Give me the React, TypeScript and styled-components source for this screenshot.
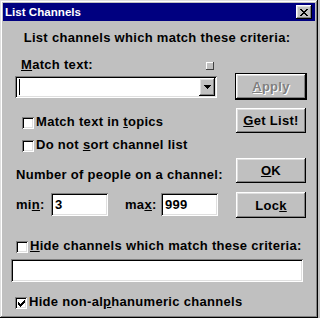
import React from "react";
import styled, { createGlobalStyle, css } from "styled-components";

const GlobalStyle = createGlobalStyle`
    html, body {
        margin: 0;
        padding: 0;
        background: #c0c0c0;
    }
    body {
        font-family: "Liberation Sans", Arial, sans-serif;
        font-size: 13px;
        font-weight: bold;
        letter-spacing: 0.3px;
        color: #000;
    }
    * {
        box-sizing: border-box;
    }
`;

const raised = css`
    background: #c0c0c0;
    box-shadow: inset -1px -1px #000, inset 1px 1px #fff, inset -2px -2px #808080, inset 2px 2px #dfdfdf;
`;

const sunken = css`
    background: #fff;
    box-shadow: inset 1px 1px #808080, inset -1px -1px #fff, inset 2px 2px #000, inset -2px -2px #dfdfdf;
`;

const Window = styled.div`
    display: flex;
    flex-direction: column;
    width: 318px;
    height: 318px;
    padding: 3px;
    background: #c0c0c0;
    box-shadow: inset -1px -1px #000, inset 1px 1px #dfdfdf, inset -2px -2px #808080, inset 2px 2px #fff;
`;

const TitleBar = styled.div`
    display: flex;
    align-items: center;
    height: 18px;
    padding-left: 2px;
    background: #000080;
    color: #fff;
    font-size: 11.6px;
    letter-spacing: 0;
    line-height: 18px;
`;

const CloseButton = styled.div`
    ${raised};
    display: flex;
    align-items: center;
    justify-content: center;
    width: 16px;
    height: 14px;
    margin-left: auto;
    margin-right: 3px;
`;

const Body = styled.div`
    display: flex;
    flex-direction: column;
    padding: 9px 12px 0 8px;
`;

const Header = styled.div`
    line-height: 15px;
    text-align: center;
    white-space: nowrap;
`;

const Main = styled.div`
    display: flex;
    margin-top: 12px;
    padding-left: 4px;
`;

const LeftColumn = styled.div`
    display: flex;
    flex-direction: column;
    width: 203px;
`;

const RightColumn = styled.div`
    display: flex;
    flex-direction: column;
    align-items: flex-start;
    width: 72px;
    margin-left: 17px;
`;

const LabelRow = styled.div`
    display: flex;
    align-items: flex-start;
    padding-left: 6px;
    line-height: 15px;
`;

const TinyBox = styled.div`
    width: 8px;
    height: 8px;
    margin: 5px 4px 0 auto;
    background: #c0c0c0;
    box-shadow: inset -1px -1px #404040, inset 1px 1px #fff;
`;

const Combo = styled.div`
    ${sunken};
    display: flex;
    align-items: center;
    width: 202px;
    height: 22px;
    margin-top: 4px;
    padding: 2px;
`;

const Caret = styled.div`
    width: 1px;
    height: 16px;
    margin-left: 2px;
    background: #000;
`;

const DropButton = styled.div`
    ${raised};
    display: flex;
    align-items: center;
    justify-content: center;
    width: 16px;
    height: 18px;
    margin-left: auto;
`;

const CheckRow = styled.div<{ $top: number; $indent: number }>`
    display: flex;
    gap: 2px;
    margin-top: ${(p) => p.$top}px;
    padding-left: ${(p) => p.$indent}px;
    line-height: 15px;
    white-space: nowrap;
`;

const CheckBox = styled.div`
    ${sunken};
    display: flex;
    align-items: center;
    justify-content: center;
    flex-shrink: 0;
    align-self: flex-end;
    width: 12px;
    height: 12px;
`;

const SectionLabel = styled.div<{ $top: number }>`
    margin-top: ${(p) => p.$top}px;
    padding-left: 1px;
    line-height: 15px;
    white-space: nowrap;
`;

const RangeRow = styled.div`
    display: flex;
    align-items: center;
    margin-top: 11px;
    padding-left: 1px;
`;

const RangeLabel = styled.div<{ $width: number; $gap?: number }>`
    width: ${(p) => p.$width}px;
    margin-left: ${(p) => p.$gap ?? 0}px;
    line-height: 15px;
`;

const NumberInput = styled.div`
    ${sunken};
    width: 57px;
    height: 23px;
    padding-left: 4px;
    line-height: 23px;
`;

const DefaultFrame = styled.div`
    width: 72px;
    height: 27px;
    margin-top: 16px;
    border: 1px solid #000;
`;

const Button = styled.div<{ $top?: number; $height?: number; $disabled?: boolean }>`
    ${raised};
    display: flex;
    align-items: center;
    justify-content: center;
    width: 70px;
    height: ${(p) => p.$height ?? 25}px;
    margin-top: ${(p) => p.$top ?? 0}px;
    color: ${(p) => (p.$disabled ? "#808080" : "#000")};
    text-shadow: ${(p) => (p.$disabled ? "1px 1px #fff" : "none")};
`;

const PushButton = styled(Button)`
    margin-left: 1px;
`;

const WideInput = styled.div`
    ${sunken};
    width: 292px;
    height: 23px;
    margin-top: 6px;
`;

function CloseGlyph() {
    const rows = [
        [0, 1, 6, 7],
        [1, 2, 5, 6],
        [2, 3, 4, 5],
        [3, 4],
        [2, 3, 4, 5],
        [1, 2, 5, 6],
        [0, 1, 6, 7],
    ];
    return (
        <svg width="8" height="7" viewBox="0 0 8 7" shapeRendering="crispEdges">
            {rows.map((cols, y) => cols.map((x) => <rect key={`${x}-${y}`} x={x} y={y} width="1" height="1" fill="#000" />))}
        </svg>
    );
}

function CheckGlyph() {
    const tops = [2, 3, 4, 3, 2, 1, 0];
    return (
        <svg width="7" height="7" viewBox="0 0 7 7" shapeRendering="crispEdges">
            {tops.map((y, x) => (
                <rect key={x} x={x} y={y} width="1" height="3" fill="#000" />
            ))}
        </svg>
    );
}

function ArrowGlyph() {
    return (
        <svg width="7" height="4" viewBox="0 0 7 4" shapeRendering="crispEdges">
            <polygon points="0,0 7,0 3.5,4" fill="#000" />
        </svg>
    );
}

function Check({ checked, top, indent, children }: { checked?: boolean; top: number; indent: number; children: React.ReactNode }) {
    return (
        <CheckRow $top={top} $indent={indent}>
            <CheckBox>{checked && <CheckGlyph />}</CheckBox>
            <span>{children}</span>
        </CheckRow>
    );
}

export default function App() {
    return (
        <>
            <GlobalStyle />
            <Window>
                <TitleBar>
                    List Channels
                    <CloseButton>
                        <CloseGlyph />
                    </CloseButton>
                </TitleBar>
                <Body>
                    <Header>List channels which match these criteria:</Header>
                    <Main>
                        <LeftColumn>
                            <LabelRow>
                                <span>
                                    <u>M</u>atch text:
                                </span>
                                <TinyBox />
                            </LabelRow>
                            <Combo>
                                <Caret />
                                <DropButton>
                                    <ArrowGlyph />
                                </DropButton>
                            </Combo>
                            <Check top={16} indent={7}>
                                Match text in <u>t</u>opics
                            </Check>
                            <Check top={8} indent={7}>
                                Do not <u>s</u>ort channel list
                            </Check>
                            <SectionLabel $top={15}>Number of people on a channel:</SectionLabel>
                            <RangeRow>
                                <RangeLabel $width={35}>
                                    mi<u>n</u>:
                                </RangeLabel>
                                <NumberInput>3</NumberInput>
                                <RangeLabel $width={36} $gap={17}>
                                    ma<u>x</u>:
                                </RangeLabel>
                                <NumberInput>999</NumberInput>
                            </RangeRow>
                        </LeftColumn>
                        <RightColumn>
                            <DefaultFrame>
                                <Button $disabled>
                                    <span>
                                        <u>A</u>pply
                                    </span>
                                </Button>
                            </DefaultFrame>
                            <PushButton $top={8}>
                                <span>
                                    <u>G</u>et List!
                                </span>
                            </PushButton>
                            <PushButton $top={25}>
                                <span>
                                    <u>O</u>K
                                </span>
                            </PushButton>
                            <PushButton $top={9} $height={26}>
                                <span>
                                    Loc<u>k</u>
                                </span>
                            </PushButton>
                        </RightColumn>
                    </Main>
                    <Check top={20} indent={5}>
                        <u>H</u>ide channels which match these criteria:
                    </Check>
                    <WideInput />
                    <Check checked top={12} indent={4}>
                        Hide non-al<u>p</u>hanumeric channels
                    </Check>
                </Body>
            </Window>
        </>
    );
}
